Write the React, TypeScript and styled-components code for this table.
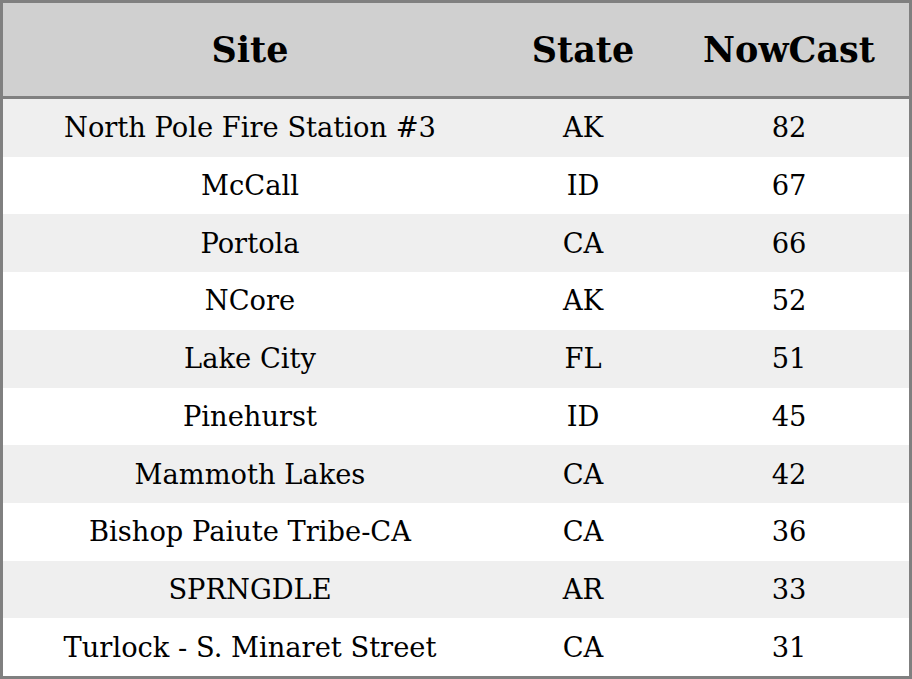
import React, { FunctionComponent } from "react";
import styled, { createGlobalStyle } from "styled-components";

interface SiteRow {
  site: string;
  state: string;
  nowCast: number;
}

const rows: SiteRow[] = [
  { site: "North Pole Fire Station #3", state: "AK", nowCast: 82 },
  { site: "McCall", state: "ID", nowCast: 67 },
  { site: "Portola", state: "CA", nowCast: 66 },
  { site: "NCore", state: "AK", nowCast: 52 },
  { site: "Lake City", state: "FL", nowCast: 51 },
  { site: "Pinehurst", state: "ID", nowCast: 45 },
  { site: "Mammoth Lakes", state: "CA", nowCast: 42 },
  { site: "Bishop Paiute Tribe-CA", state: "CA", nowCast: 36 },
  { site: "SPRNGDLE", state: "AR", nowCast: 33 },
  { site: "Turlock - S. Minaret Street", state: "CA", nowCast: 31 },
];

const GlobalStyle = createGlobalStyle`
  html, body {
    margin: 0;
    padding: 0;
    background: #ffffff;
  }
  body {
    font-family: "DejaVu Serif", "Liberation Serif", serif;
  }
`;

const Table = styled.div`
  box-sizing: border-box;
  width: 912px;
  height: 679px;
  border: 3px solid #808080;
  display: grid;
  grid-template-rows: 96px 1fr;
  color: #000000;
`;

const Header = styled.div`
  display: grid;
  grid-template-columns: 494px 172px 1fr;
  align-items: center;
  background: #d0d0d0;
  border-bottom: 3px solid #808080;
  font-weight: bold;
  font-size: 35px;
`;

const Body = styled.div`
  display: grid;
  grid-template-rows: repeat(10, 1fr);
`;

const Row = styled.div<{ $striped: boolean }>`
  display: grid;
  grid-template-columns: 494px 172px 1fr;
  align-items: center;
  background: ${({ $striped }) => ($striped ? "#efefef" : "#ffffff")};
  font-size: 27.3px;
`;

const Cell = styled.div`
  text-align: center;
  white-space: nowrap;
`;

const App: FunctionComponent = () => {
  return (
    <>
      <GlobalStyle />
      <Table>
        <Header>
          <Cell>Site</Cell>
          <Cell>State</Cell>
          <Cell>NowCast</Cell>
        </Header>
        <Body>
          {rows.map((row, i) => (
            <Row key={row.site} $striped={i % 2 === 0}>
              <Cell>{row.site}</Cell>
              <Cell>{row.state}</Cell>
              <Cell>{row.nowCast}</Cell>
            </Row>
          ))}
        </Body>
      </Table>
    </>
  );
};

export default App;
